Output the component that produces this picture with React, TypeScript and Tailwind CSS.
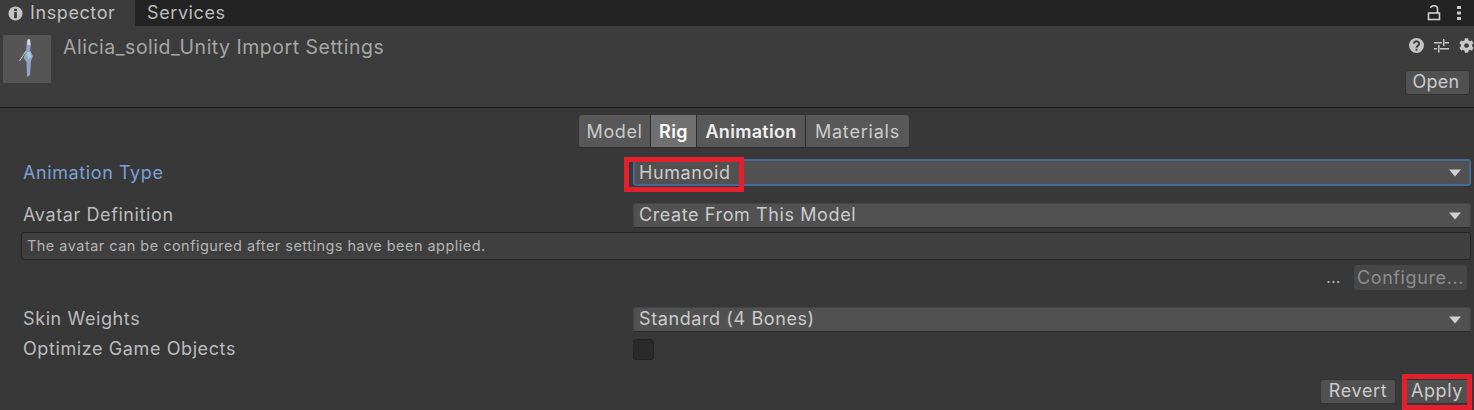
import { FaCog } from "react-icons/fa"

function Dropdown({ label, focused }: { label: string; focused?: boolean }) {
    return (
        <div
            className={`flex-1 h-full rounded-[3px] bg-[#515151] flex items-center justify-between text-[#cbcbcb] ${
                focused ? "border-2 border-[#46699b] pl-[4px] pr-[7px]" : "border border-[#454545] border-b-[#2c2c2c] pl-[5px] pr-[8px] pb-[2px]"
            }`}
        >
            <span>{label}</span>
            <svg width="14" height="8" viewBox="0 0 14 8" className={focused ? "mt-[1px]" : "mt-[2px]"}>
                <path d="M1 0.5 H13 L7 7.5 Z" fill="#d0d0d0" />
            </svg>
        </div>
    )
}

function Row({ label, blue, className, children }: { label: string; blue?: boolean; className: string; children: React.ReactNode }) {
    return (
        <div className={`flex items-center pl-[23px] pr-[3px] ${className}`}>
            <div className={`w-[610px] ${blue ? "text-[#7ba0d8]" : "text-[#bcbcbc] pb-[2px]"}`}>{label}</div>
            {children}
        </div>
    )
}

function Btn({ label, className }: { label: string; className: string }) {
    return (
        <div className={`rounded-[3px] bg-[#515151] border border-[#333333] flex items-center justify-center pb-[2px] text-[#cbcbcb] ${className}`}>
            {label}
        </div>
    )
}

export default function App() {
    return (
        <div className="w-[1474px] h-[410px] overflow-hidden bg-[#383838] text-[18px] leading-none tracking-[0.6px] font-['Inter',sans-serif] flex flex-col">
            {/* Window tabs */}
            <div className="h-[26px] bg-[#232323] flex items-stretch shrink-0">
                <div className="w-[135px] bg-[#3c3c3c] flex items-center pl-[8px] gap-[7px] text-[#c0c0c0]">
                    <svg width="15" height="15" viewBox="0 0 16 16">
                        <circle cx="8" cy="8" r="7.5" fill="#c4c4c4" />
                        <rect x="6.5" y="3" width="3" height="2.5" fill="#3c3c3c" />
                        <rect x="6.5" y="6.5" width="3" height="6.5" fill="#3c3c3c" />
                    </svg>
                    <span>Inspector</span>
                </div>
                <div className="pl-[12px] flex items-center text-[#bcbcbc]">Services</div>
                <div className="ml-auto flex items-center pr-[13px] gap-[16px]">
                    <svg width="14" height="16" viewBox="0 0 14 16" fill="none">
                        <path d="M3.5 3 a3.5 2.5 0 0 1 7 0.5 V8" stroke="#d0d0d0" strokeWidth="1.6" />
                        <rect x="1.5" y="8" width="11" height="6.5" stroke="#d0d0d0" strokeWidth="1.6" />
                    </svg>
                    <svg width="4" height="14" viewBox="0 0 4 14">
                        <rect x="0" y="0" width="4" height="3" fill="#c8c8c8" />
                        <rect x="0" y="5.5" width="4" height="3" fill="#c8c8c8" />
                        <rect x="0" y="11" width="4" height="3" fill="#c8c8c8" />
                    </svg>
                </div>
            </div>

            {/* Asset header */}
            <div className="h-[82px] shrink-0 bg-[#3c3c3c] border-b border-[#1c1c1c] flex pl-[3px] pr-[3px]">
                <div className="w-[48px] h-[48px] mt-[9px] bg-[#555555] flex items-center justify-center">
                    <svg width="16" height="42" viewBox="0 0 16 42">
                        <path d="M8 2 L11 1 L12 6 L11 12 L14 18 L12 23 L11 37 L8 39 L7.5 24 L4.5 20 L7 13 Z" fill="#8ea6c4" />
                        <path d="M7 13 L0.5 23" stroke="#cfcfcf" strokeWidth="1" />
                        <path d="M8.5 1.5 L11 1.5 L11 7 L8.5 7 Z" fill="#d8d8d8" />
                        <path d="M8 14 L11 14 L12.5 19 L9 21 Z" fill="#b4c8e0" />
                    </svg>
                </div>
                <div className="ml-[12px] mt-[12px] text-[19.5px] tracking-[0.5px] text-[#a6a6a6] h-fit">Alicia_solid_Unity Import Settings</div>
                <div className="ml-auto flex flex-col items-end">
                    <div className="flex items-center gap-[10px] mt-[12px] -mr-[3px] text-[#c8c8c8]">
                        <svg width="15" height="15" viewBox="0 0 16 16">
                            <circle cx="8" cy="8" r="8" fill="#c4c4c4" />
                            <path d="M5.2 6 a2.8 2.6 0 1 1 4.4 2.2 C8.5 9 8 9.3 8 10.5" fill="none" stroke="#3c3c3c" strokeWidth="2" />
                            <rect x="7" y="11.5" width="2" height="2" fill="#3c3c3c" />
                        </svg>
                        <svg width="15" height="15" viewBox="0 0 15 15" fill="#c8c8c8">
                            <rect x="0" y="4" width="8" height="1.5" />
                            <rect x="11" y="4" width="4" height="1.5" />
                            <rect x="9" y="1" width="1.5" height="7" />
                            <rect x="0" y="10" width="3" height="1.5" />
                            <rect x="6" y="10" width="9" height="1.5" />
                            <rect x="4" y="7" width="1.5" height="7.5" />
                        </svg>
                        <FaCog size={15} />
                    </div>
                    <Btn label="Open" className="w-[65px] h-[25px] mt-[17px] mr-[1px] pr-[3px] tracking-[0.3px]" />
                </div>
            </div>

            {/* Model / Rig / Animation / Materials */}
            <div className="flex justify-center mt-[7px] shrink-0">
                <div className="flex h-[33px] rounded-[3px] overflow-hidden border-b border-[#2c2c2c] bg-[#585858] text-[#cbcbcb] divide-x divide-[#2c2c2c] ml-[14px]">
                    <div className="w-[72px] pt-[2px] flex items-center justify-center">Model</div>
                    <div className="w-[46px] pt-[2px] flex items-center justify-center bg-[#707070] text-white font-semibold tracking-[0.4px]">Rig</div>
                    <div className="w-[109px] pt-[2px] flex items-center justify-center font-semibold tracking-[0.3px] text-[#eeeeee]">Animation</div>
                    <div className="w-[103px] pt-[2px] flex items-center justify-center tracking-[0.8px]">Materials</div>
                </div>
            </div>

            <Row label="Animation Type" blue className="h-[27px] mt-[11px] shrink-0">
                <Dropdown label="Humanoid" focused />
            </Row>
            <Row label="Avatar Definition" className="h-[25px] mt-[17px] shrink-0">
                <Dropdown label="Create From This Model" />
            </Row>

            {/* Help box */}
            <div className="h-[28px] mt-[4px] ml-[21px] mr-[3px] shrink-0 rounded-[3px] bg-[#3f3f3f] border border-[#242424] flex items-center pl-[5px] text-[14.5px] tracking-[0.47px] text-[#b4b4b4]">
                The avatar can be configured after settings have been applied.
            </div>

            <div className="h-[25px] mt-[5px] pr-[7px] shrink-0 flex items-center justify-end">
                <span className="text-[#bdbdbd] text-[15px] mr-[13px]">...</span>
                <div className="w-[113px] h-full rounded-[3px] bg-[#474747] flex items-center justify-center text-[#8e8e8e]">Configure...</div>
            </div>

            <Row label="Skin Weights" className="h-[25px] mt-[17px] shrink-0">
                <Dropdown label="Standard (4 Bones)" />
            </Row>
            <Row label="Optimize Game Objects" className="h-[21px] mt-[7px] shrink-0">
                <div className="w-[21px] h-[21px] rounded-[3px] bg-[#2a2a2a] border border-[#222222]" />
            </Row>

            {/* Revert / Apply */}
            <div className="flex justify-end gap-[8px] pr-[4px] mt-[19px] h-[25px] shrink-0">
                <Btn label="Revert" className="w-[76px]" />
                <Btn label="Apply" className="w-[66px]" />
            </div>

            {/* red annotation boxes */}
            <div className="absolute left-[624px] top-[157px] w-[120px] h-[35px] border-[5px] border-[#e3202c]" />
            <div className="absolute left-[1402px] top-[374px] w-[70px] h-[36px] border-[5px] border-[#e3202c]" />
        </div>
    )
}
